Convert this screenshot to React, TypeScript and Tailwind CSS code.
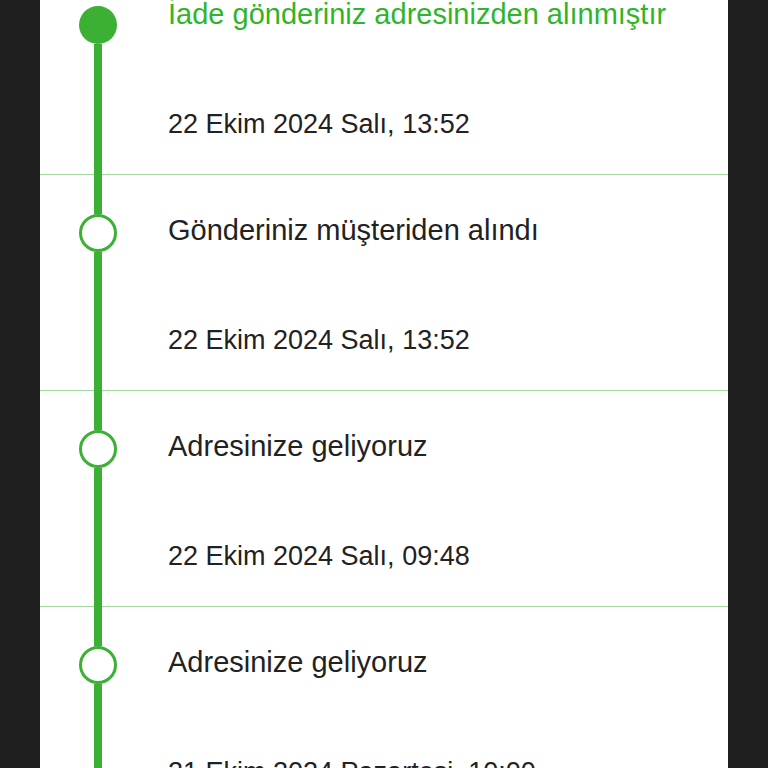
import React from 'react';

type Step = { title: string; date: string; current?: boolean };

const steps: Step[] = [
  { title: 'İade gönderiniz adresinizden alınmıştır', date: '22 Ekim 2024 Salı, 13:52', current: true },
  { title: 'Gönderiniz müşteriden alındı', date: '22 Ekim 2024 Salı, 13:52' },
  { title: 'Adresinize geliyoruz', date: '22 Ekim 2024 Salı, 09:48' },
  { title: 'Adresinize geliyoruz', date: '21 Ekim 2024 Pazartesi, 10:00' },
];

function StepRow({ step, first }: { step: Step; first: boolean }) {
  return (
    <div className="flex h-[216px] border-b border-[#a6dba0]">
      {/* timeline column */}
      <div className="w-[116px] flex flex-col items-center">
        {first ? (
          <div className="h-[47px] shrink-0" />
        ) : (
          <div className="w-2 h-[39px] shrink-0 bg-[#3cb034]" />
        )}
        {step.current ? (
          <div className="w-[38px] h-[38px] shrink-0 rounded-full bg-[#3cb034]" />
        ) : (
          <div className="w-[38px] h-[38px] shrink-0 rounded-full border-[3px] border-[#3cb034] bg-white" />
        )}
        <div className="relative w-2 flex-1 mb-[-1px] bg-[#3cb034]" />
      </div>

      <div className="ml-3 pt-[38px] font-['Liberation_Sans',Arial,sans-serif]">
        <p
          className={`text-[29px] leading-[34px] whitespace-nowrap ${
            step.current ? 'text-[#2fb52a]' : 'text-[#222222]'
          }`}
        >
          {step.title}
        </p>
        <p className="mt-[77px] text-[27px] leading-[32px] text-[#222222] whitespace-nowrap">{step.date}</p>
      </div>
    </div>
  );
}

export default function App() {
  return (
    <div className="h-screen overflow-hidden bg-[#1e1e1e] px-10">
      <div className="h-full bg-white overflow-hidden">
        <div className="mt-[-41px]">
          {steps.map((s, i) => (
            <StepRow key={i} step={s} first={i === 0} />
          ))}
        </div>
      </div>
    </div>
  );
}
